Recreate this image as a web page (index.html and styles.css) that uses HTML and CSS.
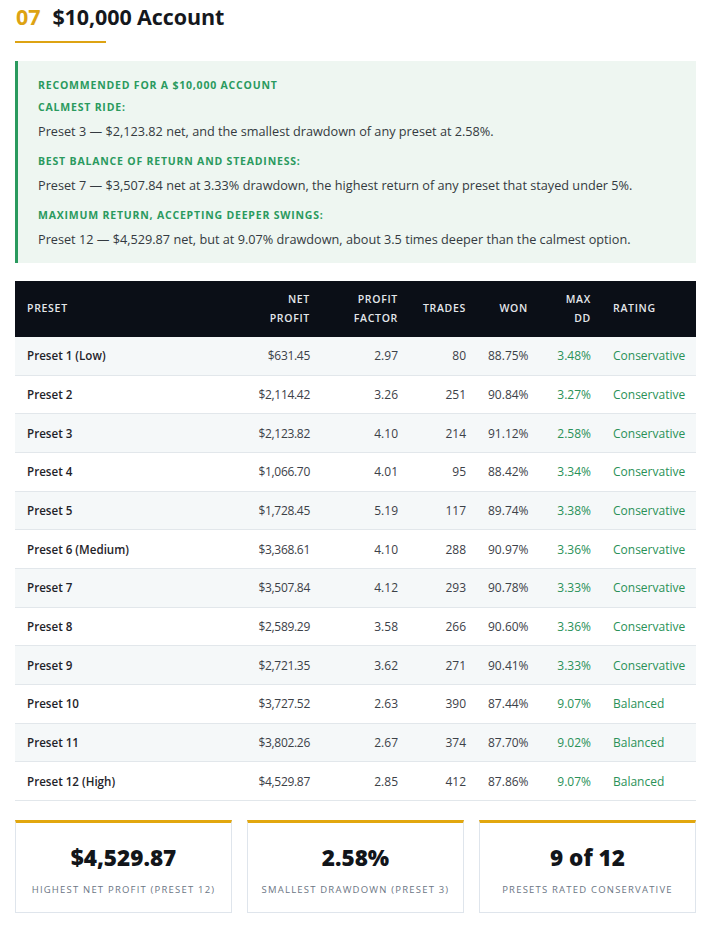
FILE: index.html
```html
<!DOCTYPE html>
<html lang="en">
<head>
<meta charset="utf-8">
<title>$10,000 Account</title>
<link rel="stylesheet" href="styles.css">
</head>
<body>
<main class="page">
  <h2 class="title"><span class="num">07</span>$10,000 Account</h2>
  <div class="rule"></div>

  <section class="callout">
    <div class="label">Recommended for a $10,000 account</div>
    <div class="label">Calmest ride:</div>
    <p class="text">Preset 3 — $2,123.82 net, and the smallest drawdown of any preset at 2.58%.</p>
    <div class="label">Best balance of return and steadiness:</div>
    <p class="text">Preset 7 — $3,507.84 net at 3.33% drawdown, the highest return of any preset that stayed under 5%.</p>
    <div class="label">Maximum return, accepting deeper swings:</div>
    <p class="text">Preset 12 — $4,529.87 net, but at 9.07% drawdown, about 3.5 times deeper than the calmest option.</p>
  </section>

  <table class="grid">
    <colgroup>
      <col class="c-name"><col class="c-net"><col class="c-pf"><col class="c-tr"><col class="c-won"><col class="c-dd"><col class="c-rt">
    </colgroup>
    <thead>
      <tr>
        <th class="l">Preset</th>
        <th class="r">Net<br>Profit</th>
        <th class="r">Profit<br>Factor</th>
        <th class="r">Trades</th>
        <th class="r">Won</th>
        <th class="r">Max<br>DD</th>
        <th class="l">Rating</th>
      </tr>
    </thead>
    <tbody>
      <tr><td class="name">Preset 1 (Low)</td><td class="r money">$631.45</td><td class="r">2.97</td><td class="r">80</td><td class="r">88.75%</td><td class="r g">3.48%</td><td class="g">Conservative</td></tr>
      <tr><td class="name">Preset 2</td><td class="r money">$2,114.42</td><td class="r">3.26</td><td class="r">251</td><td class="r">90.84%</td><td class="r g">3.27%</td><td class="g">Conservative</td></tr>
      <tr><td class="name">Preset 3</td><td class="r money">$2,123.82</td><td class="r">4.10</td><td class="r">214</td><td class="r">91.12%</td><td class="r g">2.58%</td><td class="g">Conservative</td></tr>
      <tr><td class="name">Preset 4</td><td class="r money">$1,066.70</td><td class="r">4.01</td><td class="r">95</td><td class="r">88.42%</td><td class="r g">3.34%</td><td class="g">Conservative</td></tr>
      <tr><td class="name">Preset 5</td><td class="r money">$1,728.45</td><td class="r">5.19</td><td class="r">117</td><td class="r">89.74%</td><td class="r g">3.38%</td><td class="g">Conservative</td></tr>
      <tr><td class="name">Preset 6 (Medium)</td><td class="r money">$3,368.61</td><td class="r">4.10</td><td class="r">288</td><td class="r">90.97%</td><td class="r g">3.36%</td><td class="g">Conservative</td></tr>
      <tr><td class="name">Preset 7</td><td class="r money">$3,507.84</td><td class="r">4.12</td><td class="r">293</td><td class="r">90.78%</td><td class="r g">3.33%</td><td class="g">Conservative</td></tr>
      <tr><td class="name">Preset 8</td><td class="r money">$2,589.29</td><td class="r">3.58</td><td class="r">266</td><td class="r">90.60%</td><td class="r g">3.36%</td><td class="g">Conservative</td></tr>
      <tr><td class="name">Preset 9</td><td class="r money">$2,721.35</td><td class="r">3.62</td><td class="r">271</td><td class="r">90.41%</td><td class="r g">3.33%</td><td class="g">Conservative</td></tr>
      <tr><td class="name">Preset 10</td><td class="r money">$3,727.52</td><td class="r">2.63</td><td class="r">390</td><td class="r">87.44%</td><td class="r g">9.07%</td><td class="g">Balanced</td></tr>
      <tr><td class="name">Preset 11</td><td class="r money">$3,802.26</td><td class="r">2.67</td><td class="r">374</td><td class="r">87.70%</td><td class="r g">9.02%</td><td class="g">Balanced</td></tr>
      <tr><td class="name">Preset 12 (High)</td><td class="r money">$4,529.87</td><td class="r">2.85</td><td class="r">412</td><td class="r">87.86%</td><td class="r g">9.07%</td><td class="g">Balanced</td></tr>
    </tbody>
  </table>

  <section class="cards">
    <div class="card"><div class="value">$4,529.87</div><div class="caption">Highest net profit (Preset 12)</div></div>
    <div class="card"><div class="value">2.58%</div><div class="caption">Smallest drawdown (Preset 3)</div></div>
    <div class="card"><div class="value">9 of 12</div><div class="caption">Presets rated conservative</div></div>
  </section>
</main>
</body>
</html>
```
FILE: styles.css
```css
* { box-sizing: border-box; }
html, body { margin: 0; padding: 0; background: #ffffff; }
body {
  font-family: "Open Sans", "Noto Sans", "Liberation Sans", sans-serif;
  color: #333840;
}
.page {
  width: 681px;
  margin-left: 15px;
  padding-bottom: 20px;
}
.title {
  margin: 0;
  padding-top: 3px;
  font-size: 21.5px;
  line-height: 28px;
  font-weight: 700;
  color: #15181d;
  letter-spacing: -0.1px;
}
.num {
  color: #dda313;
  margin-right: 12px;
  margin-left: 1px;
}
.rule {
  width: 91px;
  height: 2px;
  background: #dda313;
  margin-top: 10px;
}
.callout {
  margin-top: 18px;
  background: #eef6f1;
  border-left: 3px solid #2a9a5e;
  padding: 17px 20px 14px 20px;
}
.label {
  color: #2a9a5e;
  font-size: 10.5px;
  font-weight: 700;
  text-transform: uppercase;
  letter-spacing: 0.8px;
  line-height: 14px;
  margin-top: 8px;
}
.label:first-child { margin-top: 0; }
.text {
  margin: 6.5px 0 13.5px 0;
  font-size: 12.7px;
  line-height: 20px;
  color: #343a40;
}
.text + .label { margin-top: 0; }
.text:last-child { margin-bottom: 0; }
.grid {
  margin-top: 18px;
  width: 681px;
  border-collapse: collapse;
  table-layout: fixed;
  font-size: 12px;
}
.c-name { width: 215px; }
.c-net { width: 91px; }
.c-pf { width: 88px; }
.c-tr { width: 68px; }
.c-won { width: 62px; }
.c-dd { width: 63px; }
.c-rt { width: 94px; }
.grid thead tr { background: #0b0f17; height: 56px; }
.grid th {
  color: #e4e7eb;
  font-size: 10.5px;
  font-weight: 600;
  text-transform: uppercase;
  letter-spacing: 0.7px;
  line-height: 19px;
  padding: 0 11px;
  vertical-align: middle;
}
.grid th.l { text-align: left; }
.grid th.r { text-align: right; }
.grid th:first-child { padding-left: 12px; }
.grid tbody tr { height: 38.67px; }
.grid tbody tr:nth-child(odd) { background: #f5f8f9; }
.grid td {
  padding: 0 11px;
  border-bottom: 1px solid #e2e7eb;
  color: #3c4148;
  vertical-align: middle;
  white-space: nowrap;
}
.grid td.r { text-align: right; }
.grid td.money { letter-spacing: -0.3px; }
.grid td.name { font-weight: 600; font-size: 11.6px; color: #1f2329; padding-left: 12px; }
.grid td.g { color: #2a9158; }
.cards {
  margin-top: 19px;
  display: grid;
  grid-template-columns: repeat(3, 1fr);
  gap: 15px;
}
.card {
  border: 1px solid #dfe5ec;
  border-top: 3px solid #e2a70e;
  height: 93px;
  text-align: center;
  padding-top: 22px;
}
.value {
  font-size: 22.5px;
  line-height: 26px;
  font-weight: 800;
  color: #12151a;
}
.caption {
  margin-top: 12px;
  font-size: 9.5px;
  letter-spacing: 1.2px;
  text-transform: uppercase;
  color: #6c7684;
}
```
